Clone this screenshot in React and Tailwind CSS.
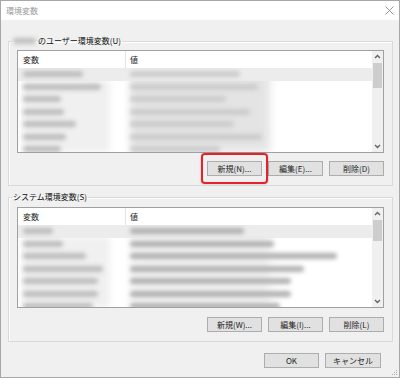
import React from 'react';

const font = { fontFamily: '"Noto Sans CJK JP", "Liberation Sans", sans-serif' };

const userRows = [
  [60, 110], [78, 128], [38, 96], [41, 120], [53, 104], [43, 132], [38, 90], [33, 112],
];

const systemRows = [
  [30, 114], [40, 144], [63, 207], [80, 174], [75, 161], [75, 161], [70, 150],
];

const Chevron = ({ up }) => (
  <svg width="7" height="5" viewBox="0 0 7 5">
    <polyline
      points={up ? '1,4 3.5,1.5 6,4' : '1,1 3.5,3.5 6,1'}
      fill="none"
      stroke="#606060"
      strokeWidth="1.3"
    />
  </svg>
);

const Scrollbar = ({ thumbTop, thumbHeight }) => (
  <div className="w-[11px] bg-[#f0f0f0] flex flex-col items-center">
    <div className="h-[11px] w-full flex items-center justify-center">
      <Chevron up />
    </div>
    <div className="w-[9px] bg-[#cdcdcd]" style={{ marginTop: thumbTop, height: thumbHeight }} />
    <div className="flex-1" />
    <div className="h-[11px] w-full flex items-center justify-center">
      <Chevron />
    </div>
  </div>
);

const ListView = ({ rows, height, thumbTop, thumbHeight, valueDark, mt }) => (
  <div className={`border border-[#a0a0a0] bg-white flex ${mt}`} style={{ height }}>
    <div className="flex-1 flex flex-col overflow-hidden">
      <div className="h-[17px] flex text-[8px] leading-[17px] text-[#222] shrink-0">
        <div className="w-[108px] pl-[5px] border-r border-[#e5e5e5]">変数</div>
        <div className="pl-[4px]">値</div>
      </div>
      <div className="relative flex-1 overflow-hidden">
        {/* faint blurred backdrop of the hidden values */}
        <div className="absolute left-[4px] top-[12px] w-[88px] bottom-0 bg-[#f0f0f0] blur-[3px]" />
        <div
          className={`absolute left-[112px] top-0 w-[140px] bottom-0 blur-[4px] ${valueDark ? 'bg-[#f3f3f3]' : 'bg-[#e4e4e4]'}`}
        />
        {rows.map(([nameW, valueW], i) => (
          <div
            key={i}
            className={`relative h-[12.5px] flex items-center ${i === 0 ? 'bg-[#ececec]' : ''}`}
          >
            <div className="w-[108px] pl-[5px]">
              <div className="h-[6px] rounded bg-[#bcbcbc] blur-[2px]" style={{ width: nameW }} />
            </div>
            <div className="pl-[4px]">
              <div
                className={`h-[6px] rounded blur-[2px] ${valueDark ? 'bg-[#b0b0b0]' : 'bg-[#cbcbcb]'}`}
                style={{ width: valueW }}
              />
            </div>
          </div>
        ))}
      </div>
    </div>
    <Scrollbar thumbTop={thumbTop} thumbHeight={thumbHeight} />
  </div>
);

const Button = ({ children, className = '' }) => (
  <button
    className={`block w-[55px] h-[15px] bg-[#e1e1e1] border border-[#adadad] text-[8px] leading-[13px] text-[#222] ${className}`}
  >
    {children}
  </button>
);

const App = () => {
  return (
    <div className="w-[400px] h-[379px] bg-white" style={font}>
      <div className="h-[378px] border border-[#a8a8a8] flex flex-col">
        <div className="h-[19px] bg-white flex items-center justify-between pl-[5px] pr-[5px] shrink-0">
          <span className="text-[8px] text-[#9a9a9a]">環境変数</span>
          <svg width="9" height="9" viewBox="0 0 9 9">
            <path d="M0.5 0.5 L8.5 8.5 M8.5 0.5 L0.5 8.5" stroke="#8a8a8a" strokeWidth="0.9" />
          </svg>
        </div>

        <div className="relative flex-1 bg-[#f0f0f0] pl-[7px] pr-[6px] pt-[15px] flex flex-col">
          <fieldset className="border border-[#d9d9d9] shadow-[inset_1px_1px_0_#ffffff] px-[8px] pb-[9px]">
            <legend className="ml-[-5px] px-[1px] text-[8px] leading-[12px] text-[#111] flex items-center">
              <span className="inline-block w-[23px] h-[6px] bg-[#bdbdbd] rounded blur-[2px] mr-[2px]" />
              のユーザー環境変数(U)
            </legend>
            <ListView rows={userRows} height={103} thumbTop={1} thumbHeight={25} mt="mt-[3px]" />
            <div className="flex justify-end gap-[6px] mt-[8px]">
              <div className="relative flex">
                <Button>新規(N)...</Button>
                <span className="absolute left-[-6px] right-[-6px] top-[-8px] bottom-[-8px] border-2 border-[#e8202a] rounded-[4px] shadow-[0_0_2px_rgba(0,0,0,0.25)]" />
              </div>
              <Button>編集(E)...</Button>
              <Button>削除(D)</Button>
            </div>
          </fieldset>

          <fieldset className="mt-[5px] border border-[#d9d9d9] shadow-[inset_1px_1px_0_#ffffff] px-[8px] pb-[9px]">
            <legend className="ml-[-5px] px-[1px] text-[8px] leading-[12px] text-[#111]">
              システム環境変数(S)
            </legend>
            <ListView rows={systemRows} height={101} thumbTop={1} thumbHeight={21} valueDark mt="mt-[4px]" />
            <div className="flex justify-end gap-[6px] mt-[9px]">
              <Button>新規(W)...</Button>
              <Button>編集(I)...</Button>
              <Button>削除(L)</Button>
            </div>
          </fieldset>

          <div className="flex justify-end gap-[6px] mt-[11px] pr-[12px]">
            <Button>OK</Button>
            <Button className="w-[56px]">キャンセル</Button>
          </div>

          <svg className="absolute right-[1px] bottom-[1px]" width="7" height="7" viewBox="0 0 7 7">
            <rect x="5" y="1" width="1" height="1" fill="#b0b0b0" />
            <rect x="3" y="3" width="1" height="1" fill="#b0b0b0" />
            <rect x="5" y="3" width="1" height="1" fill="#b0b0b0" />
            <rect x="1" y="5" width="1" height="1" fill="#b0b0b0" />
            <rect x="3" y="5" width="1" height="1" fill="#b0b0b0" />
            <rect x="5" y="5" width="1" height="1" fill="#b0b0b0" />
          </svg>
        </div>
      </div>
    </div>
  );
};

export default App;
